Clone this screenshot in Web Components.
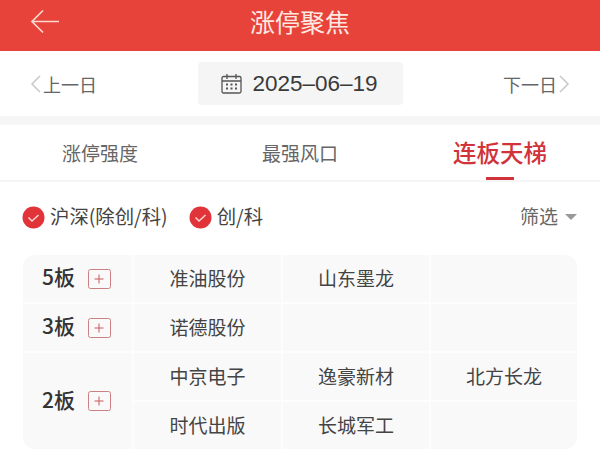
<!DOCTYPE html>
<html lang="zh-CN">
<head>
<meta charset="utf-8">
<title>涨停聚焦</title>
<style>
  html, body { margin: 0; background: #fff; }
  body {
    width: 600px;
    height: 456px;
    overflow: hidden;
    font-family: "Noto Sans CJK SC", "Liberation Sans", sans-serif;
    color: #333;
  }
</style>
</head>
<body>
<top-bar>涨停聚焦</top-bar>
<date-bar date="2025-06-19"></date-bar>
<tab-bar>
  <tab-item>涨停强度</tab-item>
  <tab-item>最强风口</tab-item>
  <tab-item active>连板天梯</tab-item>
</tab-bar>
<filter-row>
  <check-label>沪深(除创/科)</check-label>
  <check-label>创/科</check-label>
</filter-row>
<ladder-table>
  <ladder-group name="5板" rows="1">
    <stock-cell>准油股份</stock-cell><stock-cell>山东墨龙</stock-cell><stock-cell></stock-cell>
  </ladder-group>
  <ladder-group name="3板" rows="1">
    <stock-cell>诺德股份</stock-cell><stock-cell></stock-cell><stock-cell></stock-cell>
  </ladder-group>
  <ladder-group name="2板" rows="2">
    <stock-cell>中京电子</stock-cell><stock-cell>逸豪新材</stock-cell><stock-cell>北方长龙</stock-cell>
    <stock-cell>时代出版</stock-cell><stock-cell>长城军工</stock-cell><stock-cell></stock-cell>
  </ladder-group>
</ladder-table>

<script>
function define(name, html, setup) {
  customElements.define(name, class extends HTMLElement {
    connectedCallback() {
      if (this.shadowRoot) return;
      this.attachShadow({ mode: 'open' });
      this.shadowRoot.innerHTML = html;
      if (setup) setup(this);
    }
  });
}

define('top-bar', `
  <style>
    :host {
      display: flex;
      align-items: center;
      justify-content: center;
      position: relative;
      box-sizing: border-box;
      height: 51px;
      padding-bottom: 9px;
      background: #e8433a;
      color: #fde9e2;
      font-size: 25px;
    }
    svg { position: absolute; left: 30px; top: 9px; }
  </style>
  <svg width="30" height="26" viewBox="0 0 30 26" fill="none" stroke="#fbd9cf" stroke-width="1.7">
    <path d="M29 12.500H2M13 1.500 2 12.500 13 23.500"/>
  </svg>
  <slot></slot>`);

define('date-bar', `
  <style>
    :host {
      display: flex;
      align-items: center;
      justify-content: space-between;
      height: 65px;
      padding: 0 30px;
      background: #fff;
      border-bottom: 9px solid #f6f6f6;
      font-size: 18px;
      color: #666;
    }
    .side { display: flex; align-items: center; gap: 2px; width: 68px; }
    .side.next { justify-content: flex-end; }
    .date {
      display: flex;
      align-items: center;
      gap: 11px;
      box-sizing: border-box;
      width: 205px;
      height: 43px;
      padding-left: 23px;
      background: #f5f5f5;
      border-radius: 4px;
      color: #3a3a3a;
      font: 22.500px "Liberation Sans", sans-serif;
    }
  </style>
  <div class="side">
    <svg width="11" height="18" viewBox="0 0 11 18" fill="none" stroke="#c8c8c8" stroke-width="1.5"><path d="M10 1 2 9l8 8"/></svg>
    <span>上一日</span>
  </div>
  <div class="date">
    <svg width="21" height="21" viewBox="0 0 21 21" fill="none" stroke="#555" stroke-width="1.300">
      <rect x="1" y="3.500" width="19" height="16.500" rx="1.500"/>
      <path d="M1 8h19M6 1v5M15 1v5"/>
      <path stroke-width="2" d="M5 11.500h2M9.500 11.500h2M14 11.500h2M5 15.500h2M9.500 15.500h2M14 15.500h2"/>
    </svg>
    <span class="value"></span>
  </div>
  <div class="side next">
    <span>下一日</span>
    <svg width="11" height="18" viewBox="0 0 11 18" fill="none" stroke="#c8c8c8" stroke-width="1.5"><path d="M1 1l8 8-8 8"/></svg>
  </div>`, el => {
  el.shadowRoot.querySelector('.value').textContent = el.getAttribute('date').replace(/-/g, '–');
});

define('tab-bar', `
  <style>
    :host {
      display: grid;
      grid-template-columns: 200px 200px 200px;
      height: 55px;
      border-bottom: 2px solid #f5f5f5;
    }
  </style>
  <slot></slot>`);

define('tab-item', `
  <style>
    :host {
      display: flex;
      align-items: center;
      justify-content: center;
      position: relative;
      font-size: 19px;
      color: #666;
    }
    :host([active]) { font-size: 23.500px; color: #d1333a; font-weight: 500; padding-bottom: 2px; }
    :host([active])::after {
      content: "";
      position: absolute;
      left: 86px;
      bottom: 0;
      width: 28px;
      height: 3px;
      background: #d1333a;
    }
  </style>
  <slot></slot>`);

define('filter-row', `
  <style>
    :host {
      display: flex;
      align-items: center;
      gap: 21px;
      height: 70px;
      padding: 0 23px 3px 22px;
      font-size: 19.400px;
      color: #444;
    }
    .more { margin-left: auto; display: flex; align-items: center; gap: 7px; color: #666; font-size: 19px; }
    .more span { padding-bottom: 3px; }
    .caret { width: 0; height: 0; border: 6px solid transparent; border-top: 6px solid #999; border-bottom: 0; }
  </style>
  <slot></slot>
  <div class="more"><span>筛选</span><i class="caret"></i></div>`);

define('check-label', `
  <style>
    :host { display: flex; align-items: center; gap: 5px; }
    span { padding-bottom: 3px; }
  </style>
  <svg width="23" height="23" viewBox="0 0 23 23">
    <circle cx="11.500" cy="11.500" r="11" fill="#e0343a"/>
    <path d="M6.500 11.500l3.500 3.500 6.500-6" fill="none" stroke="#fbd5d0" stroke-width="1.500"/>
  </svg>
  <span><slot></slot></span>`);

define('ladder-table', `
  <style>
    :host {
      display: flex;
      flex-direction: column;
      gap: 2px;
      margin: 0 23px;
      border-radius: 12px;
      overflow: hidden;
      background: #fdfdfd;
    }
  </style>
  <slot></slot>`);

define('ladder-group', `
  <style>
    :host {
      display: grid;
      grid-template-columns: 109px 1fr;
      column-gap: 2px;
    }
    .head {
      display: flex;
      align-items: center;
      gap: 13px;
      padding-left: 19px;
      background: #f9f9f9;
      color: #333;
      font-size: 21px;
      font-weight: 500;
    }
    .name { padding-bottom: 5px; }
    .plus {
      display: flex;
      align-items: center;
      justify-content: center;
      box-sizing: border-box;
      width: 23px;
      height: 20px;
      border: 1.500px solid #cd8083;
      border-radius: 2.500px;
    }
    .cells {
      display: grid;
      grid-template-columns: 147px 146px 146px;
      grid-auto-rows: 47px;
      gap: 2px;
    }
  </style>
  <div class="head">
    <span class="name"></span>
    <span class="plus">
      <svg width="10" height="10" viewBox="0 0 10 10" stroke="#d0575a" stroke-width="1"><path d="M5 .5v9M.5 5h9"/></svg>
    </span>
  </div>
  <div class="cells"><slot></slot></div>`, el => {
  el.shadowRoot.querySelector('.name').textContent = el.getAttribute('name');
});

define('stock-cell', `
  <style>
    :host {
      display: flex;
      align-items: center;
      justify-content: center;
      box-sizing: border-box;
      padding-bottom: 2px;
      background: #f9f9f9;
      font-size: 19px;
      color: #444;
    }
  </style>
  <slot></slot>`);
</script>
</body>
</html>
